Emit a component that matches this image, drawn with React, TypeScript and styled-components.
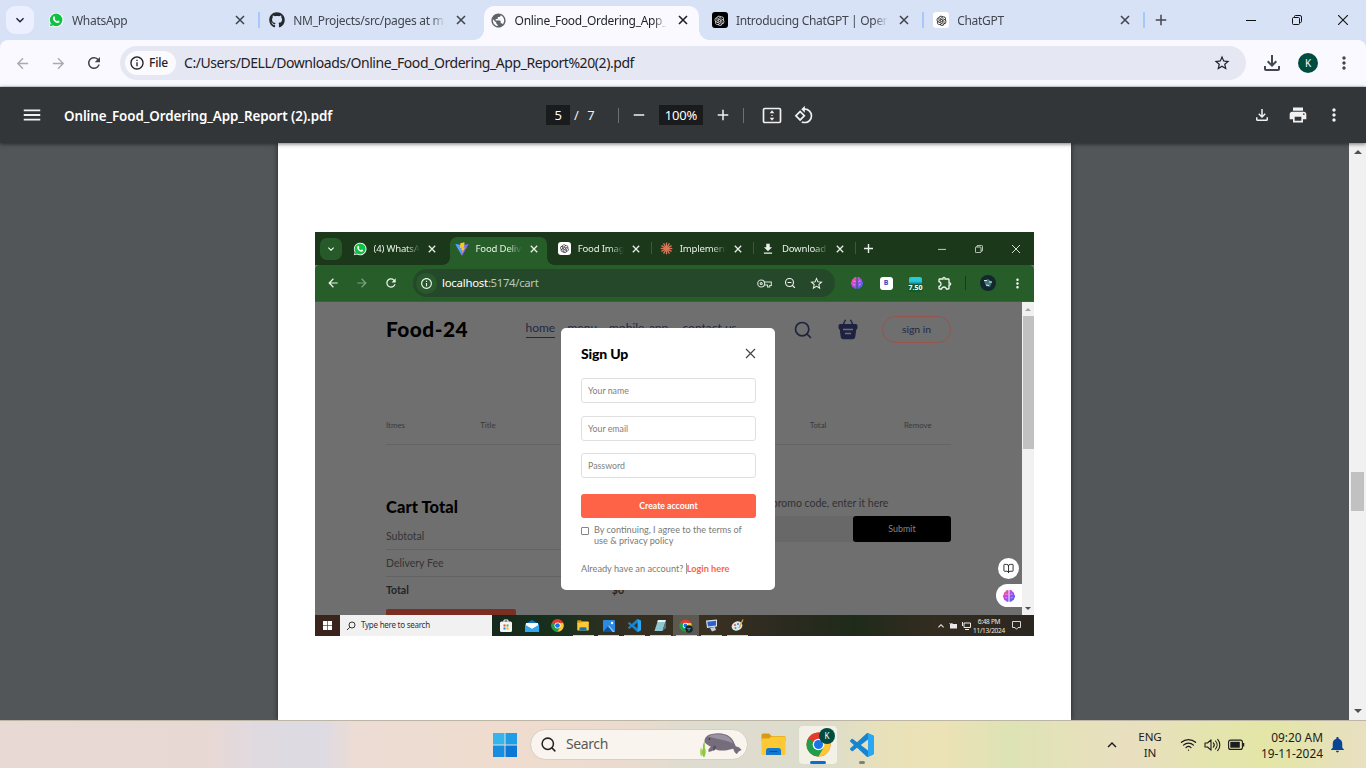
import React from "react";
import styled, { createGlobalStyle, css } from "styled-components";
import {
  MdArrowBack, MdArrowForward, MdRefresh, MdInfoOutline, MdStarBorder, MdMoreVert, MdPrint, MdMenu,
  MdAdd, MdRemove, MdOutlineFileDownload, MdRotate90DegreesCcw, MdOutlineExtension,
  MdKeyboardArrowDown, MdKeyboardArrowUp, MdNotifications, MdPublic, MdDownload,
} from "react-icons/md";
import { FaGithub } from "react-icons/fa";
import { AiOutlineOpenAI } from "react-icons/ai";
import { BookOpen, Search, Wifi, ZoomOut } from "lucide-react";

const ui = `"Noto Sans", "Open Sans", sans-serif`;
const geo = `Lato, "Open Sans", sans-serif`;

const GlobalStyle = createGlobalStyle`
  * { box-sizing: border-box; }
  html, body { margin: 0; padding: 0; overflow: hidden; }
  body { font-family: ${ui}; }
  svg { display: block; flex: none; }
`;

const Screen = styled.div`
  width: 1366px;
  height: 768px;
  display: flex;
  flex-direction: column;
  overflow: hidden;
  background: #525659;
`;

const Slot = styled.span<{ $w: number }>`
  width: ${(p) => p.$w}px;
  flex: none;
  align-self: stretch;
  display: flex;
  align-items: center;
  justify-content: center;
`;

const Spacer = styled.span`
  flex: 1;
`;

const Label = styled.span<{ $size: number; $color?: string; $weight?: number; $track?: number; $font?: string }>`
  font-family: ${(p) => p.$font || ui};
  font-size: ${(p) => p.$size}px;
  color: ${(p) => p.$color || "inherit"};
  font-weight: ${(p) => p.$weight || 400};
  letter-spacing: ${(p) => p.$track || 0}px;
  line-height: 1.3;
  white-space: nowrap;
`;

/* ---------- outer browser ---------- */

const TabStrip = styled.div`
  height: 40px;
  flex: none;
  display: flex;
  align-items: center;
  padding-left: 6px;
  background: #d8e2f6;
  color: #41464f;
`;

const TabSearch = styled.div`
  width: 28px;
  height: 28px;
  border-radius: 9px;
  margin-right: 4px;
  background: #ebefff;
  color: #1d1f24;
  display: flex;
  align-items: center;
  justify-content: center;
`;

const Tab = styled.div<{ $active?: boolean; $line?: boolean }>`
  position: relative;
  width: 221.3px;
  height: 40px;
  flex: none;
  display: flex;
  align-items: center;
  padding-left: 9.5px;
  isolation: isolate;
  ${(p) => p.$active && css`color: #1f2125;`}
  ${(p) => p.$line && css`
    &::after {
      content: "";
      position: absolute;
      right: -1px;
      top: 12px;
      width: 2px;
      height: 16px;
      background: #a8c7fa;
    }
  `}
`;

const ActiveShape = styled.span<{ $fill: string; $inset: string; $r: number }>`
  position: absolute;
  z-index: -1;
  inset: ${(p) => p.$inset};
  background: ${(p) => p.$fill};
  border-radius: ${(p) => p.$r}px ${(p) => p.$r}px 0 0;
  &::before, &::after {
    content: "";
    position: absolute;
    bottom: 0;
    width: ${(p) => p.$r}px;
    height: ${(p) => p.$r}px;
  }
  &::before {
    right: 100%;
    background: radial-gradient(circle at 0 0, transparent ${(p) => p.$r - 0.5}px, ${(p) => p.$fill} ${(p) => p.$r}px);
  }
  &::after {
    left: 100%;
    background: radial-gradient(circle at 100% 0, transparent ${(p) => p.$r - 0.5}px, ${(p) => p.$fill} ${(p) => p.$r}px);
  }
`;

const TabTitle = styled.span<{ $w: number; $size: number; $track: number; $ml: number; $fade: number }>`
  width: ${(p) => p.$w}px;
  margin-left: ${(p) => p.$ml}px;
  overflow: hidden;
  white-space: nowrap;
  font-size: ${(p) => p.$size}px;
  letter-spacing: ${(p) => p.$track}px;
  -webkit-mask-image: linear-gradient(90deg, #000 calc(100% - ${(p) => p.$fade}px), transparent);
  mask-image: linear-gradient(90deg, #000 calc(100% - ${(p) => p.$fade}px), transparent);
`;

const IconTile = styled.span<{ $bg: string; $fg: string; $s: number }>`
  width: ${(p) => p.$s}px;
  height: ${(p) => p.$s}px;
  border-radius: 3px;
  background: ${(p) => p.$bg};
  color: ${(p) => p.$fg};
  display: flex;
  align-items: center;
  justify-content: center;
`;

const AddressRow = styled.div`
  height: 47px;
  flex: none;
  background: #d8e2f6;
`;

const AddressBar = styled.div`
  height: 47px;
  display: flex;
  align-items: center;
  padding: 0 4px 0 4px;
  background: #f9f9ff;
  border-bottom: 1px solid #dfe2ec;
  border-radius: 8px 8px 0 0;
  color: #41464f;
`;

const UrlPill = styled.div`
  width: 1126px;
  height: 34px;
  margin-left: 8px;
  border-radius: 17px;
  display: flex;
  align-items: center;
  padding: 0 8px 0 5px;
  background: #e5e8f3;
  color: #1f2125;
`;

const FileChip = styled.div`
  width: 51px;
  height: 24px;
  border-radius: 12px;
  margin-right: 8px;
  padding-left: 4px;
  display: flex;
  align-items: center;
  gap: 4px;
  background: #fafaff;
`;

const Avatar = styled.span<{ $s: number; $f: number }>`
  width: ${(p) => p.$s}px;
  height: ${(p) => p.$s}px;
  border-radius: 50%;
  background: #004d40;
  color: #fff;
  font-size: ${(p) => p.$f}px;
  display: flex;
  align-items: center;
  justify-content: center;
`;

/* ---------- pdf viewer ---------- */

const PdfBar = styled.div`
  position: relative;
  z-index: 2;
  height: 56px;
  flex: none;
  display: flex;
  align-items: center;
  padding-left: 16px;
  padding-right: 14px;
  background: #323639;
  color: #f1f1f1;
  box-shadow: 0 1px 4px rgba(0, 0, 0, 0.55);
`;

const PdfName = styled.div`
  width: 498px;
  padding-left: 16px;
  padding-top: 1px;
  font-weight: 600;
  font-size: 13.4px;
  letter-spacing: -0.1px;
  white-space: nowrap;
  color: #fff;
`;

const DarkField = styled.span<{ $w: number }>`
  width: ${(p) => p.$w}px;
  height: 20px;
  background: #191b1c;
  color: #fff;
  font-size: 13px;
  letter-spacing: -0.2px;
  display: flex;
  align-items: center;
  justify-content: center;
`;

const BarLine = styled.span<{ $ml: number }>`
  width: 1px;
  height: 15px;
  margin-left: ${(p) => p.$ml}px;
  background: #6d7073;
`;

const Viewer = styled.div`
  flex: 1;
  min-height: 0;
  display: flex;
  padding-left: 278px;
`;

const Paper = styled.div`
  width: 793px;
  background: #fff;
  padding: 89px 37px 0;
  box-shadow: 0 0 5px rgba(0, 0, 0, 0.6);
`;

const ScrollTrack = styled.div<{ $w: number; $bg: string }>`
  width: ${(p) => p.$w}px;
  flex: none;
  background: ${(p) => p.$bg};
  display: flex;
  flex-direction: column;
  align-items: center;
  justify-content: space-between;
`;

const ScrollThumb = styled.div<{ $w: number; $h: number; $mt: number; $mb: number }>`
  width: ${(p) => p.$w}px;
  height: ${(p) => p.$h}px;
  margin-top: ${(p) => p.$mt}px;
  margin-bottom: ${(p) => p.$mb}px;
  background: #c1c1c1;
`;

const Arrow = styled.span<{ $down?: boolean; $s: number; $c?: string; $m: number }>`
  width: 0;
  height: 0;
  border: ${(p) => p.$s}px solid transparent;
  ${(p) => (p.$down
    ? css`border-top-color: ${p.$c || "#505050"}; border-bottom: 0; margin-bottom: ${p.$m}px;`
    : css`border-bottom-color: ${p.$c || "#505050"}; border-top: 0; margin-top: ${p.$m}px;`)}
`;

/* ---------- embedded browser ---------- */

const Shot = styled.div`
  width: 719px;
  height: 404px;
  display: flex;
  flex-direction: column;
  overflow: hidden;
  background: #707070;
`;

const GreenTabs = styled.div`
  height: 33px;
  flex: none;
  display: flex;
  align-items: center;
  padding-left: 5px;
  background: #1b381b;
  color: #e9f1e8;
`;

const GreenTab = styled.div<{ $line?: boolean }>`
  position: relative;
  isolation: isolate;
  width: 102.1px;
  height: 33px;
  flex: none;
  display: flex;
  align-items: center;
  padding-left: 7px;
  ${(p) => p.$line && css`
    &::after {
      content: "";
      position: absolute;
      right: 0;
      top: 10px;
      width: 1px;
      height: 12px;
      background: #2c6331;
    }
  `}
`;

const GreenSearch = styled(TabSearch)`
  width: 22px;
  height: 22px;
  border-radius: 7px;
  margin-right: 3px;
  background: #265b29;
  color: #fff;
`;

const GreenBar = styled.div`
  height: 37px;
  flex: none;
  display: flex;
  align-items: center;
  padding-left: 4px;
  background: #265d29;
  border-radius: 5px 5px 0 0;
  border-bottom: 1px solid #3d5e3f;
  color: #eef5ed;
`;

const GreenUrl = styled.div`
  width: 422px;
  height: 28px;
  border-radius: 14px;
  margin-left: 7px;
  margin-right: 8px;
  padding-left: 3px;
  padding-right: 6px;
  display: flex;
  align-items: center;
  background: #26482a;
`;

const InfoDisc = styled.span`
  width: 21px;
  height: 21px;
  border-radius: 50%;
  margin-right: 5px;
  background: #28592c;
  display: flex;
  align-items: center;
  justify-content: center;
`;

const ExtensionStack = styled.span`
  display: flex;
  flex-direction: column;
  align-items: center;
  margin-top: 3px;
  color: #fff;
`;

const ExtensionCount = styled.span`
  padding: 0 1px;
  border-radius: 2px;
  background: #145a2c;
  font-size: 7px;
  font-weight: 700;
  line-height: 8px;
`;

const CyanTile = styled.span`
  width: 13px;
  height: 7px;
  background: linear-gradient(#25c9da 60%, #1377a3);
  border-radius: 2px 2px 0 0;
`;

const Site = styled.div`
  flex: 1;
  min-height: 0;
  display: flex;
`;

const SitePage = styled.div`
  position: relative;
  flex: 1;
  padding: 14px 71px 0;
  overflow: hidden;
  background: #6f6f6f;
  font-family: ${geo};
`;

const SiteHeader = styled.div`
  height: 27px;
  display: flex;
  align-items: center;
`;

const Brand = styled.div`
  width: 139.5px;
  margin-top: -2px;
  font-size: 20.8px;
  font-weight: 900;
  letter-spacing: 0.5px;
  line-height: 26px;
  color: #000;
`;

const Nav = styled.div`
  display: flex;
  gap: 12.5px;
  margin-top: -2px;
  color: #242845;
  font-size: 12px;
  line-height: 18px;
  white-space: nowrap;
`;

const NavItem = styled.span<{ $on?: boolean; $w: number }>`
  width: ${(p) => p.$w}px;
  height: 19px;
  border-bottom: 1px solid ${(p) => (p.$on ? "#242845" : "transparent")};
`;

const SignIn = styled.div`
  width: 69px;
  height: 27px;
  border: 1px solid #97544f;
  border-radius: 14px;
  padding-bottom: 1px;
  color: #242845;
  font-size: 10.4px;
  display: flex;
  align-items: center;
  justify-content: center;
`;

const CartHead = styled.div`
  display: grid;
  grid-template-columns: 1fr 1.5fr 1fr 1fr 1fr 0.5fr;
  height: 26px;
  margin-top: 76px;
  border-bottom: 1px solid #646464;
  color: #3a3a3a;
  font-size: 7.9px;
  line-height: 13px;
`;

const CartBottom = styled.div`
  display: flex;
  gap: 85px;
  margin-top: 49px;
`;

const CartCol = styled.div`
  flex: 1;
  min-width: 0;
`;

const CartTitle = styled.div`
  font-size: 16.4px;
  font-weight: 900;
  line-height: 25px;
  letter-spacing: 0.1px;
  color: #000;
  margin-bottom: 4px;
`;

const CartRow = styled.div<{ $last?: boolean }>`
  height: 27px;
  display: flex;
  align-items: center;
  justify-content: space-between;
  padding-right: 2px;
  border-bottom: 1px solid ${(p) => (p.$last ? "transparent" : "#636363")};
  color: ${(p) => (p.$last ? "#242424" : "#343434")};
  font-size: 10.5px;
  font-weight: ${(p) => (p.$last ? 700 : 400)};
`;

const Checkout = styled.div`
  width: 130px;
  height: 28px;
  margin-top: 5px;
  border-radius: 2px;
  background: #7d2e22;
`;

const PromoText = styled.div`
  margin-top: 1.5px;
  font-size: 10.5px;
  line-height: 14px;
  color: #313131;
  white-space: nowrap;
`;

const PromoBox = styled.div`
  height: 26px;
  margin-top: 6px;
  display: flex;
  justify-content: flex-end;
  border-radius: 2px;
  background: #686868;
`;

const Submit = styled.div`
  width: 98px;
  border-radius: 3px;
  background: #000;
  color: #858585;
  font-size: 8.9px;
  display: flex;
  align-items: center;
  justify-content: center;
`;

const Modal = styled.div`
  position: absolute;
  left: 246px;
  top: 26px;
  width: 214px;
  height: 262px;
  border-radius: 5px;
  padding: 15px 19px 0 20px;
  background: #fff;
`;

const ModalHead = styled.div`
  height: 20px;
  margin-bottom: 15px;
  display: flex;
  align-items: center;
  justify-content: space-between;
  font-size: 14px;
  font-weight: 900;
  letter-spacing: -0.15px;
  color: #000;
`;

const Field = styled.div`
  height: 25px;
  margin-bottom: 12.5px;
  border: 1px solid #e0e0e0;
  border-radius: 3px;
  padding-left: 6px;
  display: flex;
  align-items: center;
  font-size: 8.8px;
  color: #808080;
`;

const Create = styled.div`
  height: 24px;
  margin-top: 15.5px;
  border-radius: 3px;
  background: #ff6347;
  color: #fff;
  font-size: 8.7px;
  font-weight: 700;
  display: flex;
  align-items: center;
  justify-content: center;
`;

const Terms = styled.div`
  margin-top: 6.5px;
  display: flex;
  gap: 5px;
  font-size: 9.1px;
  line-height: 11px;
  color: #7a7a7a;
  white-space: nowrap;
`;

const Checkbox = styled.span`
  width: 8px;
  height: 8px;
  margin-top: 3px;
  border: 1px solid #858585;
  border-radius: 1px;
`;

const LoginLine = styled.div`
  margin-top: 16.5px;
  font-size: 9.2px;
  line-height: 12px;
  color: #7a7a7a;
  white-space: nowrap;
  b {
    color: #ff6347;
    border-left: 1px solid #a0a0a0;
  }
`;

const FloatBook = styled.div`
  position: absolute;
  right: 3px;
  bottom: 36px;
  width: 21px;
  height: 21px;
  border-radius: 50%;
  background: #fff;
  color: #222;
  display: flex;
  align-items: center;
  justify-content: center;
`;

const FloatBrain = styled.div`
  position: absolute;
  right: 0;
  bottom: 8px;
  width: 26px;
  height: 23px;
  border-radius: 12px 0 0 12px;
  background: #fff;
  display: flex;
  align-items: center;
  justify-content: center;
`;

const Win10Bar = styled.div`
  height: 21px;
  flex: none;
  display: flex;
  align-items: center;
  background: linear-gradient(90deg, #3b241c 0, #2f231c 20%, #15291c 25%, #18301d 34%, #322f22 42%, #3a3020 55%, #2c2a20 65%, #1f2b1a 75%, #332c20 86%, #2b2620 100%);
  color: #e8e8e8;
`;

const Win10Search = styled.div`
  width: 152px;
  height: 21px;
  display: flex;
  align-items: center;
  padding-left: 6px;
  gap: 5px;
  background: #f1f1f1;
  color: #333;
  margin-right: 1px;
`;

const Win10App = styled.span<{ $open?: boolean; $on?: boolean }>`
  width: 25.75px;
  height: 21px;
  display: flex;
  align-items: center;
  justify-content: center;
  background: linear-gradient(#e8cf9a, #e8cf9a) center bottom / 21px ${(p) => (p.$open ? 1 : 0)}px no-repeat,
    ${(p) => (p.$on ? "#5c5950" : "transparent")};
`;

const TwoLines = styled.span<{ $size: number; $lh: number; $align: string; $track: number }>`
  display: flex;
  flex-direction: column;
  align-items: ${(p) => p.$align};
  font-size: ${(p) => p.$size}px;
  line-height: ${(p) => p.$lh}px;
  letter-spacing: ${(p) => p.$track}px;
  white-space: nowrap;
`;

/* ---------- desktop taskbar ---------- */

const Taskbar = styled.div`
  height: 48px;
  flex: none;
  display: flex;
  align-items: center;
  padding-left: 493px;
  padding-right: 20px;
  border-top: 1px solid #bdb5a5;
  background: linear-gradient(90deg, #e9d9d5 0, #e8d8d4 15%, #dfdae0 19%, #dddae3 23.500%, #ecdcd4 26%, #efdccf 36%, #ebdbce 46%, #dfdccf 50%, #dcdccd 60%, #e9e1b8 65%, #ece2b6 69%, #dde3b4 74%, #e6e1bb 79%, #e9dfc0 83%, #e5e4b0 88%, #e3e6a6 93%, #e6e2b6 97%, #e9dfc2 100%);
  color: #1c1c1c;
`;

const SearchPill = styled.div`
  width: 218px;
  height: 31px;
  margin: 0 13px 0 13px;
  padding: 0 5px 0 9px;
  border-radius: 16px;
  border: 1px solid #d9cfc6;
  background: #f9f4ee;
  display: flex;
  align-items: center;
`;

const AppTile = styled.div<{ $on?: boolean }>`
  position: relative;
  width: 38px;
  height: 38px;
  border-radius: 4px;
  display: flex;
  align-items: center;
  justify-content: center;
  background: ${(p) => (p.$on ? "#f3f0e6" : "transparent")};
`;

const RunMark = styled.span<{ $w: number; $c: string }>`
  position: absolute;
  bottom: 0;
  left: 50%;
  width: ${(p) => p.$w}px;
  height: 3px;
  margin-left: -${(p) => p.$w / 2}px;
  border-radius: 2px;
  background: ${(p) => p.$c};
`;

const TileBadge = styled.span`
  position: absolute;
  right: 2px;
  top: 2px;
`;

/* ---------- drawings ---------- */

const Cross = ({ s, w }: { s: number; w: number }) => (
  <svg width={s} height={s} viewBox="0 0 10 10" fill="none" stroke="currentColor" strokeWidth={w}>
    <path d="M1 1 9 9M9 1 1 9" />
  </svg>
);

const WhatsAppMark = ({ s }: { s: number }) => (
  <svg width={s} height={s} viewBox="0 0 16 16">
    <path d="M1 15.2 2 11.6A7.2 7.2 0 1 1 4.600 14.200z" fill="#fff" />
    <circle cx="8.100" cy="7.900" r="6.300" fill="#0dc143" />
    <path d="M1.900 14.300 2.700 11.200 5 13.500z" fill="#0dc143" />
    <path d="M5.500 4.700c.5-.5 1-.4 1.200.1l.5 1.200c.1.400-.5.800-.6 1.100.5 1 1.200 1.700 2.300 2.200.4-.1.700-.8 1.100-.7l1.300.6c.4.300.2 1-.2 1.400-.7.600-1.600.6-2.600.2C6.700 10.100 5.500 8.900 5 7.300c-.3-1-.1-2 .5-2.600z" fill="#fff" />
  </svg>
);

const ChromeMark = ({ s }: { s: number }) => (
  <svg width={s} height={s} viewBox="0 0 48 48">
    <circle cx="24" cy="24" r="23" fill="#e33b2e" />
    <path d="M24 24 4.100 12.500A23 23 0 0 0 24 47l10-17.300z" fill="#1e9e4a" />
    <path d="M24 13.500h20.500A23 23 0 0 1 24 47l10-17.300z" fill="#fcc934" />
    <path d="M4.100 12.500A23 23 0 0 1 44.500 13.500H24z" fill="#e33b2e" />
    <circle cx="24" cy="24" r="11.200" fill="#fff" />
    <circle cx="24" cy="24" r="8.700" fill="#1a73e8" />
  </svg>
);

const CodeMark = ({ s }: { s: number }) => (
  <svg width={s} height={s} viewBox="0 0 24 24">
    <path
      fill="#1784d0"
      d="M23.15 2.587L18.21.21a1.494 1.494 0 0 0-1.705.29l-9.46 8.63-4.12-3.128a.999.999 0 0 0-1.276.057L.327 7.261A1 1 0 0 0 .326 8.74L3.899 12 .326 15.26a1 1 0 0 0 .001 1.479L1.65 17.94a.999.999 0 0 0 1.276.057l4.12-3.128 9.46 8.63a1.492 1.492 0 0 0 1.704.29l4.942-2.377A1.5 1.5 0 0 0 24 20.06V3.939a1.5 1.5 0 0 0-.85-1.352zm-5.146 14.861L10.826 12l7.178-5.448v10.896z"
    />
    <path fill="#2aa7f2" d="M18 .3 23.150 2.587A1.500 1.500 0 0 1 24 3.939V20.060a1.500 1.500 0 0 1-.850 1.350L18 23.800z" />
  </svg>
);

const FolderMark = ({ w }: { w: number }) => (
  <svg width={w} height={w * 0.9} viewBox="0 0 25 22.500">
    <path d="M.5 2A1.500 1.500 0 0 1 2 .5h6l2.500 2.500H23A1.500 1.500 0 0 1 24.500 4.500V8H.5z" fill="#d89a13" />
    <path d="M.5 5.500h7.500L10.500 3.500H23A1.500 1.500 0 0 1 24.500 5v15.500A1.500 1.500 0 0 1 23 22H2A1.500 1.500 0 0 1 .5 20.500z" fill="#fcc934" />
    <path d="M5 22v-4.500A2.500 2.500 0 0 1 7.500 15h10a2.500 2.500 0 0 1 2.500 2.500V22z" fill="#1578cf" />
    <path d="M8.500 18.500h8" stroke="#0b4f96" strokeWidth="1.200" />
  </svg>
);

const WindowsMark = ({ s, fills, gap }: { s: number; fills: string[]; gap: number }) => {
  const c = (24 - gap) / 2;
  return (
    <svg width={s} height={s} viewBox="0 0 24 24">
      <rect x="0" y="0" width={c} height={c} fill={fills[0]} />
      <rect x={c + gap} y="0" width={c} height={c} fill={fills[1]} />
      <rect x="0" y={c + gap} width={c} height={c} fill={fills[2]} />
      <rect x={c + gap} y={c + gap} width={c} height={c} fill={fills[3]} />
    </svg>
  );
};

const BrainMark = ({ s, id }: { s: number; id: string }) => (
  <svg width={s} height={s} viewBox="0 0 24 24">
    <defs>
      <linearGradient id={id} gradientUnits="userSpaceOnUse" x1="2" y1="2" x2="22" y2="20">
        <stop offset="0" stopColor="#ff6a5a" />
        <stop offset="0.400" stopColor="#c846e8" />
        <stop offset="1" stopColor="#2f6cf5" />
      </linearGradient>
    </defs>
    <path d="M11.200 2C8.500 1 6.500 2.500 6 4.500 3.500 5 2.500 7.500 3.200 9.500 1 11 1 14 3 15.500 2.800 18.500 5 20 7 20c1 2 3 2.500 4.200 1.500zM12.800 2c2.700-1 4.700.5 5.200 2.500 2.500.5 3.500 3 2.800 5C23 11 23 14 21 15.500c.2 3-2 4.500-4 4.500-1 2-3 2.500-4.200 1.500z" fill={`url(#${id})`} />
    <path d="M6 9c1.500-1 3 0 3 1.500M5.500 15c1.500-1 3 0 3.500 1M18 9c-1.500-1-3 0-3 1.500M18.500 15c-1.500-1-3 0-3.500 1" stroke="#f3b8ff" strokeWidth="1.200" fill="none" />
  </svg>
);

const Manatee = () => (
  <svg width="43" height="26" viewBox="0 0 43 26">
    <path d="M4.500 25C2 21 3 18.500 4 16c-.5-3 .5-5 1.500-6.500.2 2.500.5 4 .3 6 1.200 3 1.200 6-.3 9.500z" fill="#8dc63f" />
    <path d="M2 24c-1.500-3-1-6 0-9 1 3 1.500 5 1.200 9z" fill="#a8d65c" />
    <path d="M5.500 8.500C6 5 9 2.500 13 2 19 .5 27 1.200 31 5c3.500 2.800 4.500 7 6 9.500 2 .2 4.500 1.500 5.500 3.500-1 .6-2 .8-2.800 1.500-.7.800-1 2-2 2.600-2-1-3-3.300-3.300-5.300-3.400.7-6 1.500-8.400 1.600-4 .5-7.500.2-10.500-1.600-1.500 1.800-3.800 3.400-6 3-.8-1.800.8-4 2.500-5C9 13 5 11.500 5.500 8.500z" fill="#756d7b" />
    <path d="M9 4.500C14 1.500 25 1.500 30 5.500c2 1.500 3 3.500 4 6C29 8.500 20 7.500 9 4.500z" fill="#9a92a1" />
    <circle cx="10.500" cy="7" r=".8" fill="#2c2731" />
    <path d="M17 14c.5 2-.5 4-2.500 5-1-1.500-.3-4 0-5.500z" fill="#5b5462" />
  </svg>
);

const Caption = ({ s, c, gap }: { s: number; c: string; gap: number }) => (
  <>
    <Slot $w={gap}>
      <svg width={s} height={s} viewBox="0 0 10 10"><path d="M0 5.500h10" stroke={c} strokeWidth="1" /></svg>
    </Slot>
    <Slot $w={gap}>
      <svg width={s} height={s} viewBox="0 0 10 10" fill="none" stroke={c}>
        <rect x=".5" y="2.500" width="7" height="7" rx="1" />
        <path d="M2.500 2.500V1.500a1 1 0 0 1 1-1H8A1.500 1.500 0 0 1 9.500 2V6.500a1 1 0 0 1-1 1H7.500" />
      </svg>
    </Slot>
    <Slot $w={gap}>
      <svg width={s} height={s} viewBox="0 0 10 10"><path d="M0 0 10 10M10 0 0 10" stroke={c} strokeWidth="1.100" /></svg>
    </Slot>
  </>
);

const ViteMark = () => (
  <svg width="14" height="14" viewBox="0 0 14 14">
    <path d="M.3 2 7 13.700 13.700 2 7 3.200z" fill="#8a6cf7" />
    <path d="M.3 2 7 13.700 5 3z" fill="#4ba5fb" />
    <path d="M9.500.3 5.300 1.200 5 6l1.700-.3-.5 2.500 1.200-.3-.4 3 3-5.500-1.500.3.800-2.500z" fill="#ffc820" />
  </svg>
);

const Burst = () => (
  <svg width="13" height="13" viewBox="-7 -7 14 14" stroke="#d97757" strokeWidth="1.400">
    {[0, 30, 60, 90, 120, 150].map((a) => (
      <path key={a} d="M-6.300 0H6.300" transform={`rotate(${a})`} />
    ))}
  </svg>
);

const FitPage = () => (
  <svg width="20" height="17" viewBox="0 0 20 17" fill="none">
    <rect x="1.500" y="1.500" width="17" height="14" rx="1.200" stroke="#f1f1f1" strokeWidth="1.700" />
    <path d="M10 3.200 12.300 6.300H7.700zM10 13.800 12.300 10.700H7.700z" fill="#f1f1f1" />
    <path d="M9.300 8.500h1.400" stroke="#f1f1f1" strokeWidth="1.200" />
  </svg>
);

const Basket = () => (
  <svg width="20" height="21" viewBox="0 0 20 21">
    <path d="M4.500 7 7.500 .8M15.500 7 12.500 .8" stroke="#1e2240" strokeWidth="1.400" />
    <rect x=".5" y="5" width="19" height="5.500" rx="1.800" fill="#1e2240" />
    <path d="M1.500 9h17l-1.200 8.500a3 3 0 0 1-3 2.700H5.700a3 3 0 0 1-3-2.700z" fill="#1e2240" />
    <path d="M5 10.500h10M7 14.500h6" stroke="#6f6f6f" strokeWidth="1.300" />
  </svg>
);

const Battery = () => (
  <svg width="17" height="12" viewBox="0 0 17 12">
    <rect x=".6" y="1.100" width="13.800" height="9.300" rx="2" fill="none" stroke="#1c1c1c" strokeWidth="1.100" />
    <rect x="2.300" y="2.800" width="9.500" height="5.900" fill="#1c1c1c" />
    <path d="M15.500 4v3.500" stroke="#1c1c1c" strokeWidth="1.500" />
  </svg>
);

const Speaker = () => (
  <svg width="17" height="14" viewBox="0 0 17 14" fill="none" stroke="#1c1c1c" strokeWidth="1.100" strokeLinejoin="round" strokeLinecap="round">
    <path d="M1 5h2.500L7 1.800v10.400L3.500 9H1z" />
    <path d="M9.300 4.800a3.300 3.300 0 0 1 0 4.400M11.500 3a6 6 0 0 1 0 8M13.700 1.300a8.700 8.700 0 0 1 0 11.400" />
  </svg>
);

/* ---------- sections ---------- */

const outerTabs = [
  { title: "WhatsApp", icon: <WhatsAppMark s={16} />, line: true },
  { title: "NM_Projects/src/pages at main", icon: <FaGithub size={16} color="#24292f" /> },
  { title: "Online_Food_Ordering_App_Report", icon: <MdPublic size={17} color="#5f6368" />, active: true },
  { title: "Introducing ChatGPT | OpenAI", icon: <IconTile $bg="#000" $fg="#ddd" $s={16}><AiOutlineOpenAI size={13} /></IconTile>, line: true },
  { title: "ChatGPT", icon: <IconTile $bg="#fff" $fg="#222" $s={16}><AiOutlineOpenAI size={13} /></IconTile>, line: true },
];

const innerTabs = [
  { title: "(4) WhatsApp", icon: <WhatsAppMark s={14} /> },
  { title: "Food Delivery", icon: <ViteMark />, active: true },
  { title: "Food Images", icon: <IconTile $bg="#fff" $fg="#222" $s={13}><AiOutlineOpenAI size={11} /></IconTile>, line: true },
  { title: "Implementing", icon: <Burst />, line: true },
  { title: "Download a", icon: <MdDownload size={14} />, line: true },
];

function BrowserChrome() {
  return (
    <>
      <TabStrip>
        <TabSearch><MdKeyboardArrowDown size={16} /></TabSearch>
        {outerTabs.map((t) => (
          <Tab key={t.title} $line={t.line} $active={t.active}>
            {t.active && <ActiveShape $fill="#f9f9ff" $inset="6px 3px 0 3px" $r={10} />}
            <Slot $w={17}>{t.icon}</Slot>
            <TabTitle $w={152} $size={12} $track={-0.3} $ml={7.5} $fade={14}>{t.title}</TabTitle>
            <Slot $w={32}><Cross s={10} w={1.6} /></Slot>
          </Tab>
        ))}
        <Slot $w={33}><MdAdd size={18} /></Slot>
        <Spacer />
        <Caption s={10} c="#111" gap={46} />
      </TabStrip>
      <AddressRow>
        <AddressBar>
          <Slot $w={36}><MdArrowBack size={17} color="#a8abb2" /></Slot>
          <Slot $w={36}><MdArrowForward size={17} color="#a8abb2" /></Slot>
          <Slot $w={36}><MdRefresh size={18} /></Slot>
          <UrlPill>
            <FileChip>
              <MdInfoOutline size={16} />
              <Label $size={12} $weight={500} $track={-0.2}>File</Label>
            </FileChip>
            <Label $size={14} $track={-0.43}>C:/Users/DELL/Downloads/Online_Food_Ordering_App_Report%20(2).pdf</Label>
            <Spacer />
            <Slot $w={32}><MdStarBorder size={18} /></Slot>
          </UrlPill>
          <Slot $w={52}><MdOutlineFileDownload size={24} /></Slot>
          <Slot $w={20}><Avatar $s={20} $f={10}>K</Avatar></Slot>
          <Spacer />
          <Slot $w={36}><MdMoreVert size={20} /></Slot>
        </AddressBar>
      </AddressRow>
    </>
  );
}

function PdfToolbar() {
  return (
    <PdfBar>
      <Slot $w={32}><MdMenu size={22} /></Slot>
      <PdfName>Online_Food_Ordering_App_Report (2).pdf</PdfName>
      <DarkField $w={24}>5</DarkField>
      <Slot $w={13}><Label $size={13}>/</Label></Slot>
      <Slot $w={16}><Label $size={13}>7</Label></Slot>
      <BarLine $ml={19} />
      <Slot $w={40}><MdRemove size={18} /></Slot>
      <DarkField $w={44}>100%</DarkField>
      <Slot $w={40}><MdAdd size={18} /></Slot>
      <BarLine $ml={0} />
      <Slot $w={56}><FitPage /></Slot>
      <Slot $w={8}><MdRotate90DegreesCcw size={20} /></Slot>
      <Spacer />
      <Slot $w={36}><MdOutlineFileDownload size={18} /></Slot>
      <Slot $w={36}><MdPrint size={20} /></Slot>
      <Slot $w={36}><MdMoreVert size={20} /></Slot>
    </PdfBar>
  );
}

function CartPage() {
  return (
    <Site>
      <SitePage>
        <SiteHeader>
          <Brand>Food-24</Brand>
          <Nav>
            <NavItem $w={29.5} $on>home</NavItem>
            <NavItem $w={29}>menu</NavItem>
            <NavItem $w={61}>mobile-app</NavItem>
            <NavItem $w={54}>contact us</NavItem>
          </Nav>
          <Spacer />
          <Slot $w={20}><Search size={20} color="#20243f" strokeWidth={2} /></Slot>
          <Slot $w={69}><Basket /></Slot>
          <SignIn>sign in</SignIn>
        </SiteHeader>
        <CartHead>
          <span>Itmes</span><span>Title</span><span /><span /><span>Total</span><span>Remove</span>
        </CartHead>
        <CartBottom>
          <CartCol>
            <CartTitle>Cart Total</CartTitle>
            <CartRow><span>Subtotal</span></CartRow>
            <CartRow><span>Delivery Fee</span></CartRow>
            <CartRow $last><span>Total</span><span>$0</span></CartRow>
            <Checkout />
          </CartCol>
          <CartCol>
            <PromoText>If you have a promo code, enter it here</PromoText>
            <PromoBox><Submit>Submit</Submit></PromoBox>
          </CartCol>
        </CartBottom>
        <Modal>
          <ModalHead>
            <span>Sign Up</span>
            <svg width="11" height="11" viewBox="0 0 11 11"><path d="M1 1 10 10M10 1 1 10" stroke="#444" strokeWidth="1.200" /></svg>
          </ModalHead>
          <Field>Your name</Field>
          <Field>Your email</Field>
          <Field>Password</Field>
          <Create>Create account</Create>
          <Terms>
            <Checkbox />
            <span>By continuing, I agree to the terms of<br />use &amp; privacy policy</span>
          </Terms>
          <LoginLine>Already have an account? <b>Login here</b></LoginLine>
        </Modal>
        <FloatBook><BookOpen size={11} /></FloatBook>
        <FloatBrain><BrainMark s={14} id="brainFloat" /></FloatBrain>
      </SitePage>
      <ScrollTrack $w={12} $bg="#f1f1f1">
        <Arrow $s={3} $m={6} $c="#a3a3a3" />
        <ScrollThumb $w={11} $h={133} $mt={3} $mb={156} />
        <Arrow $s={3} $m={5} $down />
      </ScrollTrack>
    </Site>
  );
}

function InnerTaskbar() {
  return (
    <Win10Bar>
      <Slot $w={25}><WindowsMark s={9} gap={1.5} fills={["#fff", "#fff", "#fff", "#fff"]} /></Slot>
      <Win10Search>
        <svg width="10" height="10" viewBox="0 0 10 10" fill="none" stroke="#333"><circle cx="6" cy="4" r="3" /><path d="M3.800 6.200 1 9" /></svg>
        <Label $size={8} $track={-0.25}>Type here to search</Label>
      </Win10Search>
      <Win10App>
        <svg width="12" height="13" viewBox="0 0 12 13"><path d="M4 3V1h4v2" stroke="#fff" fill="none" /><rect y="2.500" width="12" height="10.500" rx="1.500" fill="#f5f5f5" /><path d="M3.500 5.500h2v2h-2z" fill="#e84c2b" /><path d="M6.500 5.500h2v2h-2z" fill="#5fae2b" /><path d="M3.500 8.500h2v2h-2z" fill="#2184dc" /><path d="M6.500 8.500h2v2h-2z" fill="#f0b41c" /></svg>
      </Win10App>
      <Win10App>
        <svg width="14" height="12" viewBox="0 0 14 12"><path d="M0 4 7 0l7 4v8H0z" fill="#1273c4" /><path d="M1 3h12v3L7 9 1 6z" fill="#fff" /><path d="M0 4.500 7 9l7-4.500V12H0z" fill="#35a7ec" /></svg>
      </Win10App>
      <Win10App><ChromeMark s={13} /></Win10App>
      <Win10App $open><FolderMark w={12} /></Win10App>
      <Win10App $open>
        <svg width="12" height="12" viewBox="0 0 12 12"><rect width="12" height="12" rx="1" fill="#2a8ae6" /><path d="M0 12 6 5l6 7z" fill="#0c4fa0" /><path d="M5 6.200 6 5l6 7H9.500z" fill="#7cc0f5" /><circle cx="9" cy="3" r="1.200" fill="#fff" /></svg>
      </Win10App>
      <Win10App $open><CodeMark s={13} /></Win10App>
      <Win10App $open>
        <svg width="12" height="13" viewBox="0 0 12 13"><path d="M4 1h8L8.500 12H.5z" fill="#8fc6cf" /><path d="M4 1h8l-.6 2H3.400z" fill="#e5f4f5" /><path d="M8.500 12 12 1v8z" fill="#4b7c86" /></svg>
      </Win10App>
      <Win10App $open $on>
        <svg width="14" height="14" viewBox="0 0 14 14">
          <circle cx="6.500" cy="6.500" r="6" fill="#e33b2e" />
          <path d="M6.500 6.500 1.300 3.500A6 6 0 0 0 6.500 12.500z" fill="#1e9e4a" />
          <path d="M6.500 4h5.500a6 6 0 0 1-5.500 8.500z" fill="#fcc934" />
          <circle cx="6.500" cy="6.500" r="2.700" fill="#fff" />
          <circle cx="6.500" cy="6.500" r="2" fill="#1a73e8" />
          <circle cx="10" cy="10" r="3.800" fill="#12282c" />
          <path d="M8.200 9.500h3.500M9 11h2" stroke="#6fa0a5" strokeWidth=".8" />
        </svg>
      </Win10App>
      <Win10App $open>
        <svg width="13" height="13" viewBox="0 0 13 13"><path d="M1 1.500 12 .5v7L2 9z" fill="#d7e2f5" /><path d="M2.200 2.700 11 1.800v4.700L3 7.600z" fill="#2d5fc8" /><path d="M5 9l5-1 1 3-4 1.500z" fill="#c5cede" /></svg>
      </Win10App>
      <Win10App $open>
        <svg width="13" height="13" viewBox="0 0 13 13"><ellipse cx="6" cy="7" rx="5.500" ry="4.500" fill="#dde6ea" transform="rotate(-25 6 7)" /><circle cx="4" cy="6" r="1" fill="#e0553d" /><circle cx="7" cy="5" r="1" fill="#3d83d8" /><circle cx="4.500" cy="9" r="1" fill="#4ca64c" /><path d="M12 .5 8 9" stroke="#e0a13c" strokeWidth="1.300" /></svg>
      </Win10App>
      <Spacer />
      <Slot $w={12}><MdKeyboardArrowUp size={12} /></Slot>
      <Slot $w={12}><svg width="9" height="6" viewBox="0 0 9 6"><rect x="1" y="1" width="7" height="4.500" fill="#e8e8e8" /><path d="M0 0h3v2" stroke="#e8e8e8" fill="none" /></svg></Slot>
      <Slot $w={14}><svg width="9" height="8" viewBox="0 0 9 8" fill="none" stroke="#e8e8e8"><path d="M2 1h6.500v4.500H2zM.5 0v4M3 7.500h4" /></svg></Slot>
      <Slot $w={32}>
        <TwoLines $size={6.5} $lh={9} $align="center" $track={-0.27}><span>6:48 PM</span><span>11/13/2024</span></TwoLines>
      </Slot>
      <Slot $w={23}>
        <svg width="9" height="9" viewBox="0 0 9 9" fill="none" stroke="#e8e8e8" strokeWidth=".9"><path d="M.5.500h8v6h-2.500L4.500 8.300 3 6.500H.5z" /></svg>
      </Slot>
      <Slot $w={6} />
    </Win10Bar>
  );
}

function EmbeddedShot() {
  return (
    <Shot>
      <GreenTabs>
        <GreenSearch><MdKeyboardArrowDown size={12} /></GreenSearch>
        <Slot $w={1} />
        {innerTabs.map((t) => (
          <GreenTab key={t.title} $line={t.line}>
            {t.active && <ActiveShape $fill="#265d29" $inset="5px 3px 0 2px" $r={7} />}
            <Slot $w={14}>{t.icon}</Slot>
            <TabTitle $w={46} $size={9.6} $track={-0.2} $ml={6.5} $fade={14}>{t.title}</TabTitle>
            <Slot $w={24}><Cross s={8} w={1.6} /></Slot>
          </GreenTab>
        ))}
        <Slot $w={24}>
          <svg width="9" height="9" viewBox="0 0 9 9" stroke="currentColor" strokeWidth="1.400"><path d="M4.500 0v9M0 4.500h9" /></svg>
        </Slot>
        <Spacer />
        <Caption s={8} c="#eef5ed" gap={37} />
      </GreenTabs>
      <GreenBar>
        <Slot $w={28}><MdArrowBack size={14} /></Slot>
        <Slot $w={29}><MdArrowForward size={14} color="#7ea480" /></Slot>
        <Slot $w={30}><MdRefresh size={14} /></Slot>
        <GreenUrl>
          <InfoDisc><MdInfoOutline size={13} /></InfoDisc>
          <Label $size={11.4} $color="#fff" $track={-0.25}>localhost</Label>
          <Label $size={11.4} $color="#b8c9b8" $track={-0.35}>:5174/cart</Label>
          <Spacer />
          <Slot $w={26}>
            <svg width="15" height="9" viewBox="0 0 15 9" fill="none" stroke="#d5e2d4" strokeWidth="1.100"><circle cx="4.200" cy="4.500" r="3.500" /><circle cx="4.200" cy="4.500" r="1" /><path d="M7.500 3h6.800v3.500h-1.600v1.500h-2.200V6H7.500" /></svg>
          </Slot>
          <Slot $w={26}><ZoomOut size={12} strokeWidth={2.2} /></Slot>
          <Slot $w={26}><MdStarBorder size={15} /></Slot>
        </GreenUrl>
        <Slot $w={28}><BrainMark s={14} id="brainBar" /></Slot>
        <Slot $w={30}><IconTile $bg="#fff" $fg="#3344b8" $s={13}><Label $size={7} $weight={700}>B</Label></IconTile></Slot>
        <Slot $w={29}><ExtensionStack><CyanTile /><ExtensionCount>7.50</ExtensionCount></ExtensionStack></Slot>
        <Slot $w={29}><MdOutlineExtension size={16} /></Slot>
        <Slot $w={12}><svg width="1" height="14"><rect width="1" height="14" fill="#173c1a" /></svg></Slot>
        <Slot $w={33}>
          <svg width="16" height="16" viewBox="0 0 16 16"><circle cx="8" cy="8" r="8" fill="#12282c" /><path d="M4 6l4-2 4 3-2 5-4-1z" fill="#47757b" /><path d="M4 5.500h3M9 7h3M6 10l3 .5" stroke="#d7eef0" /></svg>
        </Slot>
        <Slot $w={26}><MdMoreVert size={15} /></Slot>
      </GreenBar>
      <CartPage />
      <InnerTaskbar />
    </Shot>
  );
}

function DesktopTaskbar() {
  return (
    <Taskbar>
      <WindowsMark s={24} gap={1} fills={["#35b5ee", "#1f9ee6", "#168ddf", "#0a78d4"]} />
      <SearchPill>
        <Search size={17} strokeWidth={2.2} color="#222" />
        <Slot $w={9} />
        <Label $size={14} $color="#5a5856" $track={-0.4}>Search</Label>
        <Spacer />
        <Manatee />
      </SearchPill>
      <FolderMark w={25} />
      <Slot $w={13} />
      <AppTile $on>
        <ChromeMark s={25} />
        <TileBadge><Avatar $s={16} $f={8}>K</Avatar></TileBadge>
        <RunMark $w={16} $c="#0a6ed1" />
      </AppTile>
      <Slot $w={6} />
      <AppTile>
        <CodeMark s={24} />
        <RunMark $w={6} $c="#84806f" />
      </AppTile>
      <Spacer />
      <Slot $w={36}><MdKeyboardArrowUp size={18} /></Slot>
      <Slot $w={40}>
        <TwoLines $size={11.6} $lh={16} $align="center" $track={-0.1}><span>ENG</span><span>IN</span></TwoLines>
      </Slot>
      <Slot $w={6} />
      <Slot $w={24}><Wifi size={17} strokeWidth={1.8} /></Slot>
      <Slot $w={24}><Speaker /></Slot>
      <Slot $w={24}><Battery /></Slot>
      <Slot $w={75}>
        <Spacer />
        <TwoLines $size={11.9} $lh={16} $align="flex-end" $track={0}><span>09:20 AM</span><span>19-11-2024</span></TwoLines>
      </Slot>
      <Slot $w={6} />
      <Slot $w={17}><MdNotifications size={19} color="#0a4595" /></Slot>
    </Taskbar>
  );
}

export default function App() {
  return (
    <Screen>
      <GlobalStyle />
      <BrowserChrome />
      <PdfToolbar />
      <Viewer>
        <Paper><EmbeddedShot /></Paper>
        <Spacer />
        <ScrollTrack $w={17} $bg="#f1f1f1">
          <Arrow $s={4} $m={7} />
          <ScrollThumb $w={13} $h={39} $mt={314} $mb={195} />
          <Arrow $s={4} $m={7} $down />
        </ScrollTrack>
      </Viewer>
      <DesktopTaskbar />
    </Screen>
  );
}
